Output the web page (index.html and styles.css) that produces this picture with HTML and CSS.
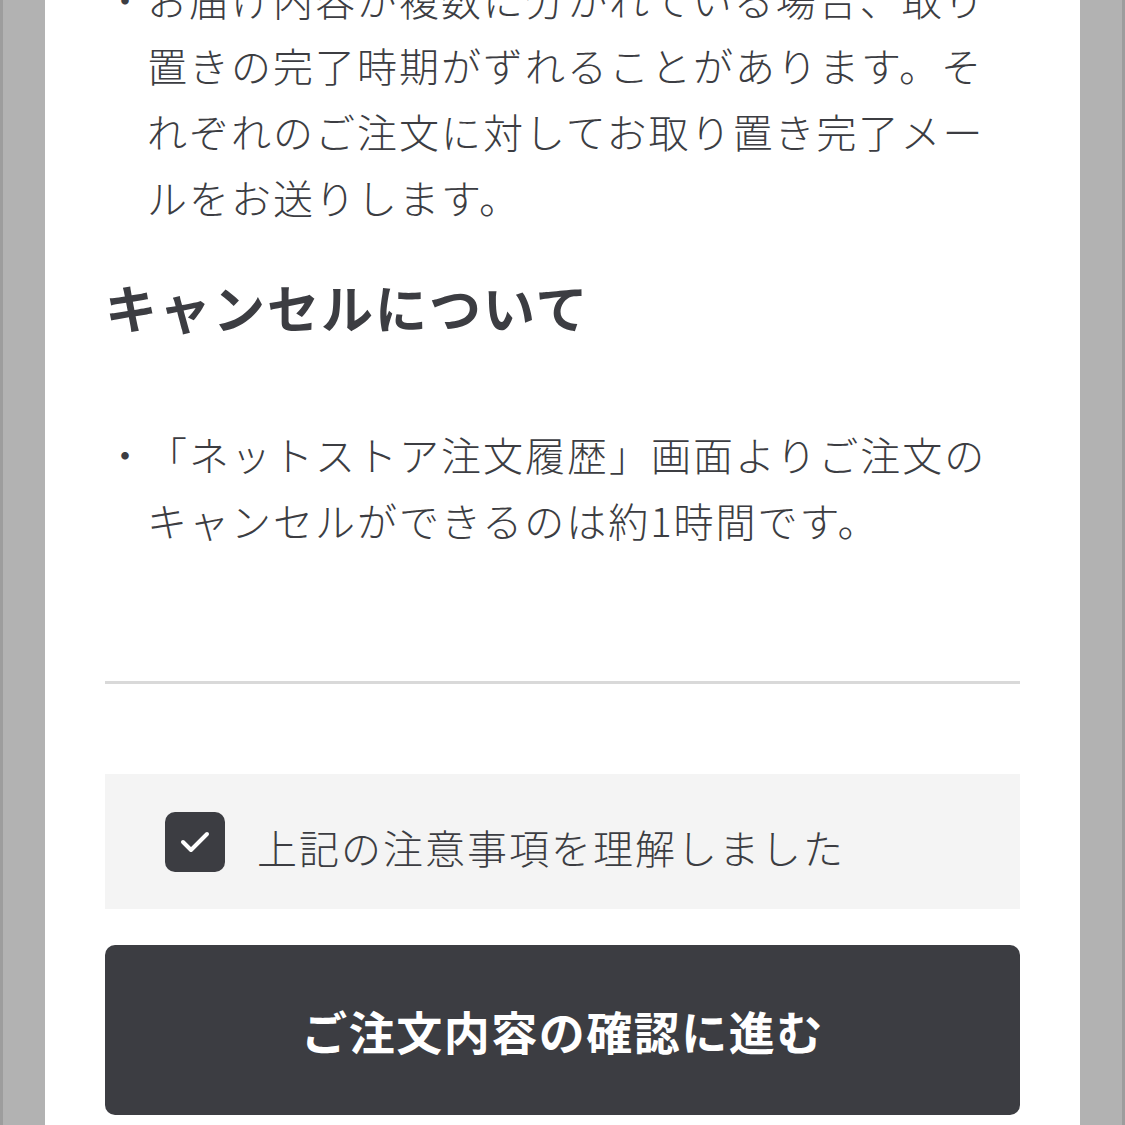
FILE: index.html
```html
<!DOCTYPE html>
<html lang="ja">
<head>
    <meta charset="UTF-8">
    <meta name="viewport" content="width=device-width, initial-scale=1.0">
    <title>ご注文前の注意事項</title>
    <link rel="stylesheet" href="styles.css">
</head>
<body>
    <div class="sheet">
        <ul class="notes notes-first">
            <li><span class="mark">・</span><span>お届け内容が複数に分かれている場合、取り置きの完了時期がずれることがあります。それぞれのご注文に対してお取り置き完了メールをお送りします。</span></li>
        </ul>

        <h2 class="section-title">キャンセルについて</h2>
        <ul class="notes notes-cancel">
            <li><span class="mark">・</span><span>「ネットストア注文履歴」画面よりご注文のキャンセルができるのは約1時間です。</span></li>
        </ul>

        <hr class="divider">

        <label class="agree" for="agree">
            <input type="checkbox" id="agree" checked>
            <span class="agree-box">
                <svg viewBox="0 0 60 60" width="60" height="60">
                    <polyline points="18,30 26,38 42,22" fill="none" stroke="#fff" stroke-width="4" stroke-linecap="round" stroke-linejoin="round"/>
                </svg>
            </span>
            <span class="agree-text">上記の注意事項を理解しました</span>
        </label>

        <button type="button" class="btn-next">ご注文内容の確認に進む</button>
    </div>
</body>
</html>
```

FILE: styles.css
```css
html {
    background: #b2b2b2;
}
body {
    margin: 0;
    background: #b2b2b2;
    border-left: 3px solid #9d9d9d;
    border-right: 3px solid #9d9d9d;
    font-family: "Noto Sans CJK JP", "Noto Sans", sans-serif;
    color: #3c3d42;
}
.sheet {
    margin: 0 42px;
    padding: 0 60px 40px;
    background: #fff;
    overflow: hidden;
}
.notes {
    margin: 0;
    padding: 0;
    list-style: none;
    font-size: 40px;
    font-weight: 300;
    line-height: 66px;
    letter-spacing: 2px;
}
.notes li {
    display: flex;
}
.mark {
    flex: none;
}
.notes-first {
    margin-top: -34px;
}
.section-title {
    margin: 41px 0 0;
    font-size: 52px;
    line-height: 72px;
    font-weight: 700;
    letter-spacing: 2px;
}
.notes-cancel {
    margin-top: 78px;
}
.divider {
    margin: 128px 0 0;
    border: none;
    border-top: 3px solid #d9d9d9;
}
.agree {
    margin-top: 90px;
    height: 135px;
    padding-left: 60px;
    display: flex;
    align-items: center;
    gap: 32px;
    background: #f4f4f4;
    cursor: pointer;
}
.agree input {
    display: none;
}
.agree-box {
    width: 60px;
    height: 60px;
    flex: none;
    border-radius: 10px;
    background: #3c3d42;
}
.agree-box svg {
    display: block;
}
.agree-text {
    font-size: 40px;
    font-weight: 300;
    letter-spacing: 2px;
    line-height: 1;
    padding-top: 10px;
}
.btn-next {
    display: block;
    width: 100%;
    height: 170px;
    margin-top: 36px;
    border: none;
    border-radius: 10px;
    background: #3c3d42;
    color: #fff;
    font-family: inherit;
    font-size: 46px;
    font-weight: 700;
    letter-spacing: 1.5px;
    cursor: pointer;
}
```
